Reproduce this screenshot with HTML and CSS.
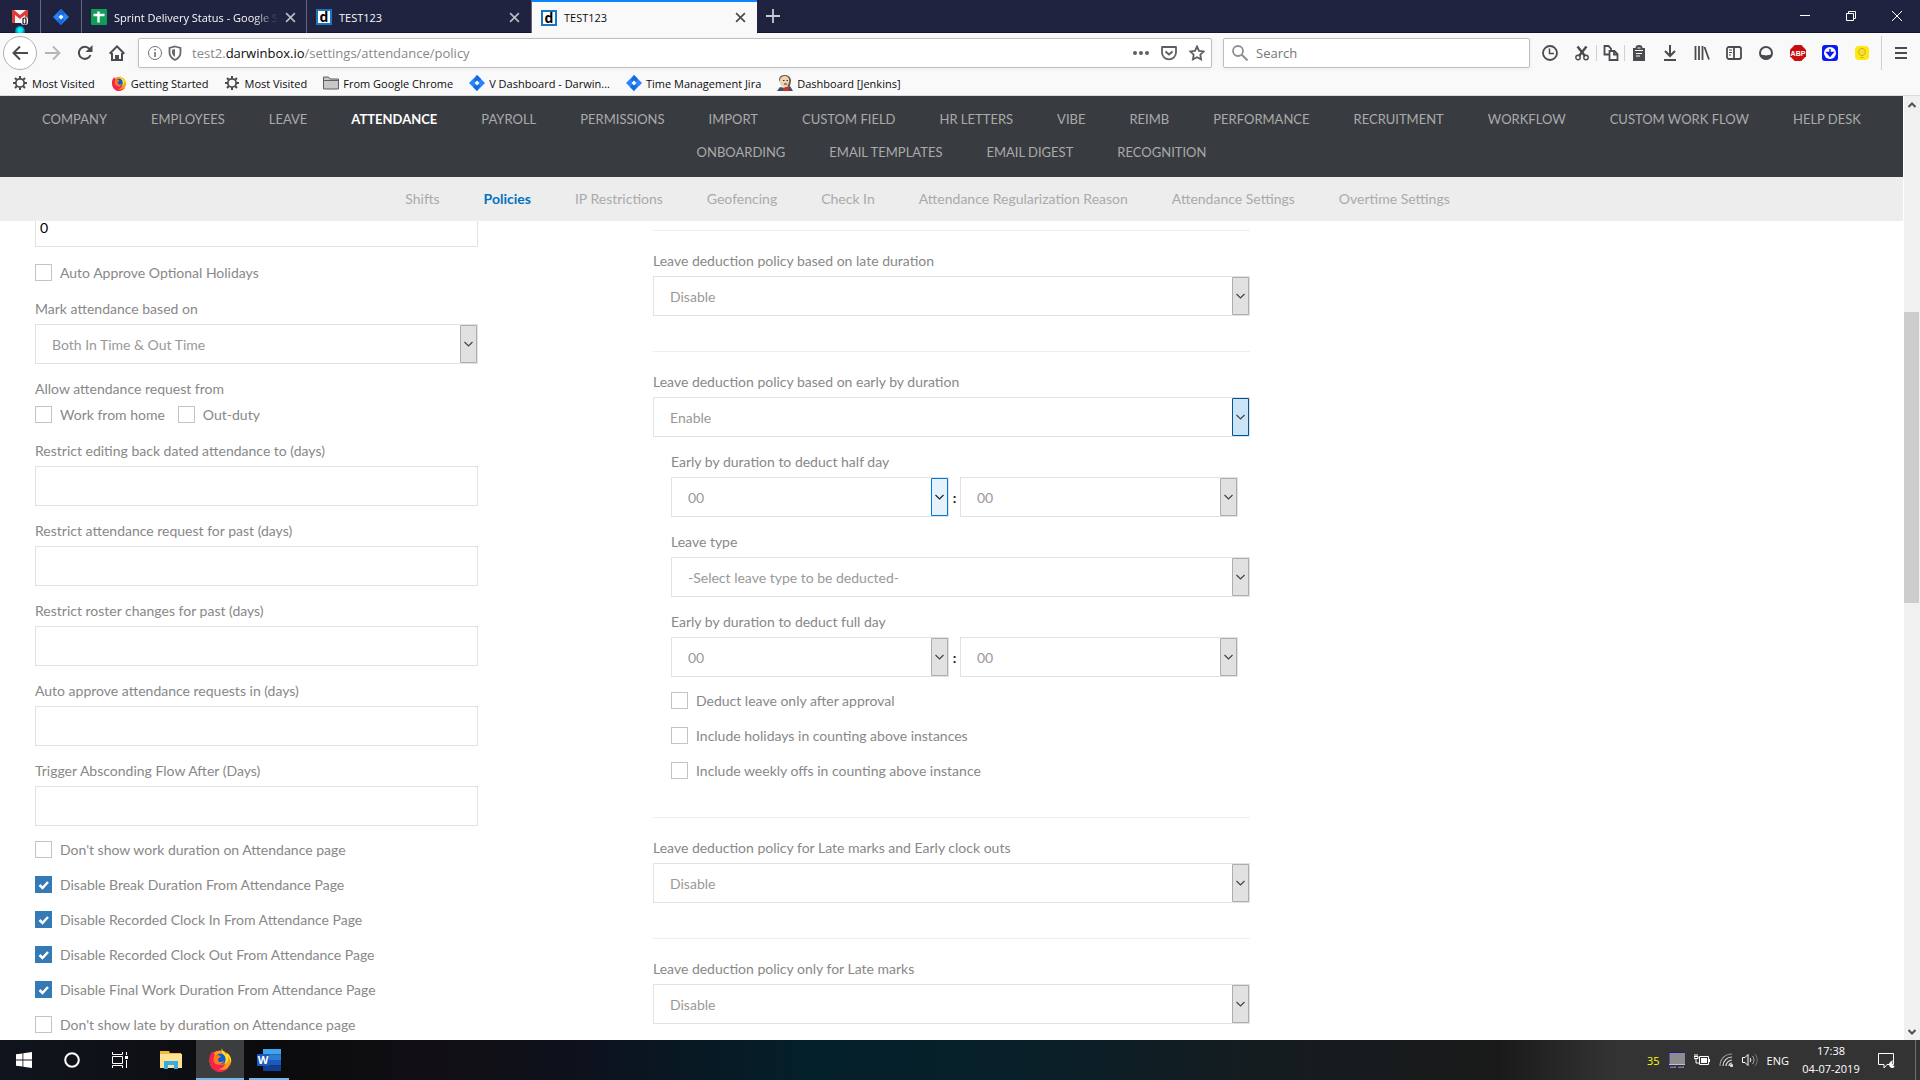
FILE: index.html
```html
<!DOCTYPE html>
<html lang="en">
<head>
    <meta charset="UTF-8">
    <meta name="viewport" content="width=device-width, initial-scale=1.0">
    <title>TEST123</title>
    <link rel="stylesheet" href="styles.css">
</head>
<body>
    <!-- shared icons -->
    <svg class="sprite" aria-hidden="true">
        <symbol id="jira" viewBox="0 0 16 16">
            <path d="M8 0l8 8-8 8-8-8z" fill="#2684ff"/>
            <path d="M8 0l4 4-4 4-3-3zM8 16l-4-4 4-4 3 3z" fill="#1769e0"/>
            <path d="M8 5.6L10.4 8 8 10.4 5.6 8z" fill="#fff"/>
        </symbol>
        <symbol id="gear" viewBox="0 0 16 16">
            <circle cx="8" cy="8" r="4.2" fill="none" stroke="#4a4a4f" stroke-width="1.8"/>
            <path d="M8 1v2.5M8 12.500v2.500M1 8h2.500M12.500 8H15M3 3l1.800 1.800M11.200 11.200L13 13M13 3l-1.800 1.800M4.800 11.200L3 13" stroke="#4a4a4f" stroke-width="2"/>
        </symbol>
        <symbol id="firefox" viewBox="0 0 24 24">
            <circle cx="12" cy="13" r="10.500" fill="#ff9a1f"/>
            <path d="M1.500 13C1 8 3 5 5 3c0 2 1 3 2 3.500C5 10 6 14 9 16s7 1 8-1c0 4-4 6-7 6 5 2 10 0 12-4-2 5-6 7-10 7C6 24 2 19 1.500 13z" fill="#f5224d"/>
            <circle cx="12.500" cy="11" r="5.500" fill="#0a5fd8"/>
            <path d="M7 8c3-2 4 0 6 0-1 2-3 2-3 4s3 3 6 1c-1 4-8 5-10 1-1-2-1-4 1-6z" fill="#ff7a16"/>
            <path d="M14 0c-1 3 0 5 2 7s2 6 1 9c3-2 4-5 3-8 2 2 3 6 2 10 3-7 0-11-3-13 0 1 0 2-1 2-1-3-4-4-4-7z" fill="#ffe226"/>
        </symbol>
        <symbol id="close" viewBox="0 0 10 10">
            <path d="M1 1l8 8M9 1L1 9" stroke="currentColor" stroke-width="1.500"/>
        </symbol>
    </svg>

    <header class="browser">
        <div class="tab-bar">
            <button class="tab pinned" aria-label="Gmail">
                <svg width="16" height="16" viewBox="0 0 16 16">
                    <path d="M0 1h16v13H0z" fill="#f4f4f4"/>
                    <path d="M0 14V1h2l6 5 6-5h2v13h-3V6L8 10 3 6v8z" fill="#dc3e37"/>
                    <rect x="9" y="8" width="7" height="8" rx="3" fill="#fff"/>
                    <rect x="11" y="9" width="3" height="6" rx="1" fill="none" stroke="#111" stroke-width="1.200"/>
                </svg>
                <span class="glow"></span>
            </button>
            <button class="tab pinned" aria-label="Jira"><svg width="16" height="16"><use href="#jira"/></svg></button>
            <div class="tab">
                <svg width="16" height="16" viewBox="0 0 16 16">
                    <rect width="16" height="16" rx="1" fill="#109d58"/>
                    <path d="M2.500 6h11M7.500 2.500v11" stroke="#fff" stroke-width="2.400"/>
                </svg>
                <span class="tab-title fade">Sprint Delivery Status - Google S</span>
                <button class="tab-close" aria-label="Close tab"><svg width="11" height="11"><use href="#close"/></svg></button>
            </div>
            <div class="tab">
                <span class="favicon">d</span>
                <span class="tab-title">TEST123</span>
                <button class="tab-close" aria-label="Close tab"><svg width="11" height="11"><use href="#close"/></svg></button>
            </div>
            <div class="tab active">
                <span class="favicon">d</span>
                <span class="tab-title">TEST123</span>
                <button class="tab-close" aria-label="Close tab"><svg width="11" height="11"><use href="#close"/></svg></button>
            </div>
            <button class="new-tab" aria-label="New tab">
                <svg width="14" height="14" viewBox="0 0 14 14"><path d="M7 0v14M0 7h14" stroke="#c9cad4" stroke-width="1.800"/></svg>
            </button>
            <div class="window-buttons">
                <button aria-label="Minimize"><svg width="10" height="10" viewBox="0 0 10 10"><path d="M0 4.500h10" stroke="#fff"/></svg></button>
                <button aria-label="Restore"><svg width="10" height="10" viewBox="0 0 10 10"><path d="M.5 2.500h7v7h-7zM2.500 2V.5h7v7H8" fill="none" stroke="#fff"/></svg></button>
                <button aria-label="Close"><svg width="10" height="10" viewBox="0 0 10 10"><path d="M0 0l10 10M10 0L0 10" stroke="#fff"/></svg></button>
            </div>
        </div>

        <div class="toolbar">
            <button class="tool back" aria-label="Back">
                <svg width="16" height="16" viewBox="0 0 16 16"><path d="M16 8H1.500M8 1.500L1.500 8 8 14.500" fill="none" stroke="#4a4a4f" stroke-width="2"/></svg>
            </button>
            <button class="tool" aria-label="Forward">
                <svg width="16" height="16" viewBox="0 0 16 16"><path d="M0 8h14.500M8 1.500L14.500 8 8 14.500" fill="none" stroke="#b5b5b7" stroke-width="1.800"/></svg>
            </button>
            <button class="tool" aria-label="Reload">
                <svg width="16" height="16" viewBox="0 0 16 16"><path d="M13.500 10A6 6 0 1 1 12.500 4" fill="none" stroke="#4a4a4f" stroke-width="2"/><path d="M15.500 0v7H8.500z" fill="#4a4a4f"/></svg>
            </button>
            <button class="tool" aria-label="Home">
                <svg width="16" height="16" viewBox="0 0 16 16"><path d="M.7 8.700L8 1.400l7.300 7.300" fill="none" stroke="#4a4a4f" stroke-width="2"/><path d="M3 8v7h10V8M7 15v-4h2v4" fill="none" stroke="#4a4a4f" stroke-width="2"/></svg>
            </button>
            <div class="url-bar">
                <svg width="16" height="16" viewBox="0 0 16 16"><circle cx="8" cy="8" r="6.500" fill="none" stroke="#737377"/><path d="M8 7v5M8 4v1.600" stroke="#737377" stroke-width="1.600"/></svg>
                <svg width="16" height="16" viewBox="0 0 16 16"><path d="M8 1.500l5.500 1.500v4.500c0 3.500-2.500 6-5.500 7.500-3-1.500-5.500-4-5.500-7.500V3z" fill="none" stroke="#6a6a6e" stroke-width="1.800"/><path d="M8 4v8C6 10.500 5 9 5 7.500V4.700z" fill="#6a6a6e"/></svg>
                <a class="url" href="#">test2.<b>darwinbox.io</b>/settings/attendance/policy</a>
                <svg width="16" height="16" viewBox="0 0 16 16" fill="#5f5f63"><circle cx="2" cy="8" r="2"/><circle cx="8" cy="8" r="2"/><circle cx="14" cy="8" r="2"/></svg>
                <svg width="16" height="16" viewBox="0 0 16 16" fill="none" stroke="#5f5f63" stroke-width="1.800"><path d="M1 2h14v5.500a7 6.800 0 0 1-14 0z" stroke-linejoin="round"/><path d="M4.500 6.500L8 9.500l3.500-3" stroke-width="2"/></svg>
                <svg width="16" height="16" viewBox="0 0 16 16"><path d="M8 1.500l2 4.300 4.700.6-3.400 3.300.8 4.700L8 12.200l-4.100 2.200.8-4.700L1.300 6.400 6 5.800z" fill="none" stroke="#5f5f63" stroke-width="1.800"/></svg>
            </div>
            <div class="search-bar">
                <svg width="16" height="16" viewBox="0 0 16 16"><circle cx="6" cy="6" r="5" fill="none" stroke="#8f8f92" stroke-width="1.800"/><path d="M9.500 9.500l6 6" stroke="#8f8f92" stroke-width="2"/></svg>
                <input type="text" aria-label="Search" placeholder="Search">
            </div>
            <div class="extensions">
                <button class="tool" aria-label="History"><svg width="16" height="16" viewBox="0 0 16 16" fill="none" stroke="#4a4a4f"><circle cx="8" cy="8" r="7" stroke-width="1.800"/><path d="M7.500 3.500V8.500H12" stroke-width="1.500"/></svg></button>
                <button class="tool" aria-label="Cut"><svg width="14" height="16" viewBox="0 0 14 16" fill="none" stroke="#4a4a4f"><circle cx="3" cy="12.500" r="2.200" stroke-width="1.400"/><circle cx="11" cy="12.500" r="2.200" stroke-width="1.400"/><path d="M4 11L11.500 1.500M10 11L2.500 1.500" stroke-width="2.400"/></svg></button>
                <div class="edit-tools">
                    <span class="divider"></span>
                    <button class="tool narrow" aria-label="Copy"><svg width="16" height="16" viewBox="0 0 16 16" fill="#f9f9fa" stroke="#4a4a4f" stroke-width="1.800"><path d="M1.500 1h4l2.500 2.500v6H1.500z"/><path d="M6.500 6h5l3 3v6h-8z"/><path d="M11 6v3.500h3.500" fill="none"/></svg></button>
                    <span class="divider"></span>
                    <button class="tool narrow" aria-label="Paste"><svg width="14" height="16" viewBox="0 0 14 16"><path d="M1 3h2.500a3.500 3 0 0 1 7 0H13v13H1z" fill="#4a4a4f"/><path d="M3 5.500h8M4 8.500h6M4 11h4M5.500 3h3" stroke="#f9f9fa" stroke-width="1.200"/></svg></button>
                </div>
                <button class="tool" aria-label="Downloads"><svg width="14" height="16" viewBox="0 0 14 16" fill="none" stroke="#4a4a4f" stroke-width="2"><path d="M7 0v11M2 6l5 5 5-5M1 15h12"/></svg></button>
                <button class="tool" aria-label="Library"><svg width="16" height="16" viewBox="0 0 16 16" stroke="#4a4a4f" stroke-width="1.800"><path d="M1.500 1v14M5 1v14M8.500 1v14M10.500 2L15 14.500"/></svg></button>
                <button class="tool" aria-label="Sidebar"><svg width="16" height="16" viewBox="0 0 16 16" fill="none" stroke="#4a4a4f"><rect x="1" y="2" width="14" height="12" rx="2" stroke-width="1.800"/><path d="M8 2v12" stroke-width="1.800"/><path d="M3 5h3M3 7.500h3M3 10h2"/></svg></button>
                <button class="tool" aria-label="Account"><svg width="16" height="16" viewBox="0 0 16 16"><circle cx="8" cy="8" r="6" fill="#f9f9fa" stroke="#4a4a4f" stroke-width="2"/><path d="M2 8.500c1 1.500 2.500 1.500 3.500 1.500h5c1 0 2.500 0 3.500-1.500C14 12 11 14.500 8 14.500S2 12 2 8.500z" fill="#4a4a4f"/><path d="M5 5v2a3 3.500 0 0 0 6 0V5z" fill="#f9f9fa"/></svg></button>
                <button class="tool" aria-label="Adblock Plus"><svg width="16" height="16" viewBox="0 0 16 16"><path d="M4.700 0h6.600L16 4.700v6.600L11.300 16H4.700L0 11.300V4.700z" fill="#c70d0d"/><text x="8" y="10.500" class="abp">ABP</text></svg></button>
                <button class="tool" aria-label="Download helper"><svg width="16" height="16" viewBox="0 0 16 16"><rect width="16" height="16" rx="3" fill="#0a1bf2"/><circle cx="8" cy="8" r="6" fill="#fff"/><path d="M8 4v5M5 7.500l3 3.500 3-3.500z" fill="#0a1bf2" stroke="#0a1bf2" stroke-width="1.500"/></svg></button>
                <button class="tool" aria-label="Lights"><svg width="16" height="16" viewBox="0 0 16 16"><rect x="1" y="1" width="14" height="14" rx="4" fill="#fbea0c"/><path d="M6.500 10.500C3 7 5 3.500 8 3.500s5 3.500 1.500 7zM6.500 12.500h3" fill="#f7dc3a" stroke="#cfae1d"/></svg></button>
                <span class="divider tall"></span>
                <button class="tool" aria-label="Menu"><svg width="12" height="12" viewBox="0 0 12 12"><path d="M0 1h12M0 6h12M0 11h12" stroke="#4a4a4f" stroke-width="2"/></svg></button>
            </div>
        </div>

        <nav class="bookmarks" aria-label="Bookmarks">
            <a href="#"><svg width="16" height="16"><use href="#gear"/></svg>Most Visited</a>
            <a href="#"><svg width="16" height="16"><use href="#firefox"/></svg>Getting Started</a>
            <a href="#"><svg width="16" height="16"><use href="#gear"/></svg>Most Visited</a>
            <a href="#"><svg width="16" height="16" viewBox="0 0 16 16"><path d="M.5 14V2h5l1.500 2h8.500v10z" fill="#c8c8ca" stroke="#5f5f63"/><path d="M1 5.500h14" stroke="#5f5f63"/></svg>From Google Chrome</a>
            <a href="#"><svg width="16" height="16"><use href="#jira"/></svg>V Dashboard - Darwin...</a>
            <a href="#"><svg width="16" height="16"><use href="#jira"/></svg>Time Management Jira</a>
            <a href="#">
                <svg width="16" height="16" viewBox="0 0 16 16"><path d="M2 5C2 1 5 0 8 0s6 2 6 6l-1 5H5z" fill="#6b5a4c"/><path d="M3 5c0-3 3-4 5-4s5 2 4 6-2 5-4 5-4-1-5-4z" fill="#efd2b0"/><path d="M0 16l3-4 5 1 5-2 3 5z" fill="#33566b"/><path d="M6 13l6-2v5H6z" fill="#c9302c"/><path d="M6 5.500h1.500M9.500 5.500H11M7 9h3" stroke="#333"/></svg>Dashboard [Jenkins]</a>
        </nav>
    </header>

    <div class="viewport">
        <div class="page">
            <nav class="main-nav" aria-label="Settings">
                <a href="#">COMPANY</a>
                <a href="#">EMPLOYEES</a>
                <a href="#">LEAVE</a>
                <a href="#" class="current">ATTENDANCE</a>
                <a href="#">PAYROLL</a>
                <a href="#">PERMISSIONS</a>
                <a href="#">IMPORT</a>
                <a href="#">CUSTOM FIELD</a>
                <a href="#">HR LETTERS</a>
                <a href="#">VIBE</a>
                <a href="#">REIMB</a>
                <a href="#">PERFORMANCE</a>
                <a href="#">RECRUITMENT</a>
                <a href="#">WORKFLOW</a>
                <a href="#">CUSTOM WORK FLOW</a>
                <a href="#">HELP DESK</a>
                <a href="#">ONBOARDING</a>
                <a href="#">EMAIL TEMPLATES</a>
                <a href="#">EMAIL DIGEST</a>
                <a href="#">RECOGNITION</a>
            </nav>
            <nav class="sub-nav" aria-label="Attendance">
                <a href="#">Shifts</a>
                <a href="#" class="current">Policies</a>
                <a href="#">IP Restrictions</a>
                <a href="#">Geofencing</a>
                <a href="#">Check In</a>
                <a href="#">Attendance Regularization Reason</a>
                <a href="#">Attendance Settings</a>
                <a href="#">Overtime Settings</a>
            </nav>

            <main class="content">
                <form class="policy-form">
                    <div class="column">
                        <div class="form-group">
                            <input type="text" class="form-control" aria-label="Days" value="0">
                        </div>
                        <div class="check-row spaced">
                            <label class="check"><input type="checkbox">Auto Approve Optional Holidays</label>
                        </div>
                        <div class="form-group">
                            <label for="mark-based">Mark attendance based on</label>
                            <select id="mark-based" class="form-control"><option>Both In Time &amp; Out Time</option></select>
                        </div>
                        <fieldset>
                            <legend>Allow attendance request from</legend>
                            <div class="check-row spaced">
                                <label class="check"><input type="checkbox">Work from home</label>
                                <label class="check"><input type="checkbox">Out-duty</label>
                            </div>
                        </fieldset>
                        <div class="form-group">
                            <label for="back-dated">Restrict editing back dated attendance to (days)</label>
                            <input type="text" id="back-dated" class="form-control">
                        </div>
                        <div class="form-group">
                            <label for="request-past">Restrict attendance request for past (days)</label>
                            <input type="text" id="request-past" class="form-control">
                        </div>
                        <div class="form-group">
                            <label for="roster-past">Restrict roster changes for past (days)</label>
                            <input type="text" id="roster-past" class="form-control">
                        </div>
                        <div class="form-group">
                            <label for="auto-approve">Auto approve attendance requests in (days)</label>
                            <input type="text" id="auto-approve" class="form-control">
                        </div>
                        <div class="form-group">
                            <label for="absconding">Trigger Absconding Flow After (Days)</label>
                            <input type="text" id="absconding" class="form-control">
                        </div>
                        <div class="check-row"><label class="check"><input type="checkbox">Don't show work duration on Attendance page</label></div>
                        <div class="check-row"><label class="check"><input type="checkbox" checked>Disable Break Duration From Attendance Page</label></div>
                        <div class="check-row"><label class="check"><input type="checkbox" checked>Disable Recorded Clock In From Attendance Page</label></div>
                        <div class="check-row"><label class="check"><input type="checkbox" checked>Disable Recorded Clock Out From Attendance Page</label></div>
                        <div class="check-row"><label class="check"><input type="checkbox" checked>Disable Final Work Duration From Attendance Page</label></div>
                        <div class="check-row"><label class="check"><input type="checkbox">Don't show late by duration on Attendance page</label></div>
                    </div>

                    <div class="column deductions">
                        <section>
                            <div class="form-group">
                                <label for="late-duration">Leave deduction policy based on late duration</label>
                                <select id="late-duration" class="form-control"><option>Disable</option></select>
                            </div>
                        </section>
                        <section>
                            <div class="form-group">
                                <label for="early-duration">Leave deduction policy based on early by duration</label>
                                <select id="early-duration" class="form-control pressed"><option>Enable</option></select>
                            </div>
                            <div class="nested">
                                <div class="form-group">
                                    <label for="half-hours">Early by duration to deduct half day</label>
                                    <div class="time-row">
                                        <select id="half-hours" class="form-control hovered"><option>00</option></select>
                                        <span>:</span>
                                        <select class="form-control" aria-label="Half day minutes"><option>00</option></select>
                                    </div>
                                </div>
                                <div class="form-group">
                                    <label for="leave-type">Leave type</label>
                                    <select id="leave-type" class="form-control"><option>-Select leave type to be deducted-</option></select>
                                </div>
                                <div class="form-group">
                                    <label for="full-hours">Early by duration to deduct full day</label>
                                    <div class="time-row">
                                        <select id="full-hours" class="form-control"><option>00</option></select>
                                        <span>:</span>
                                        <select class="form-control" aria-label="Full day minutes"><option>00</option></select>
                                    </div>
                                </div>
                                <div class="check-row"><label class="check"><input type="checkbox">Deduct leave only after approval</label></div>
                                <div class="check-row"><label class="check"><input type="checkbox">Include holidays in counting above instances</label></div>
                                <div class="check-row"><label class="check"><input type="checkbox">Include weekly offs in counting above instance</label></div>
                            </div>
                        </section>
                        <section>
                            <div class="form-group">
                                <label for="late-early">Leave deduction policy for Late marks and Early clock outs</label>
                                <select id="late-early" class="form-control"><option>Disable</option></select>
                            </div>
                        </section>
                        <section>
                            <div class="form-group">
                                <label for="late-only">Leave deduction policy only for Late marks</label>
                                <select id="late-only" class="form-control"><option>Disable</option></select>
                            </div>
                        </section>
                    </div>
                </form>
            </main>
        </div>
        <div class="scrollbar">
            <button aria-label="Scroll up"><svg width="8" height="6" viewBox="0 0 8 6"><path d="M.5 5L4 1.500 7.500 5" fill="none" stroke="#505050" stroke-width="2"/></svg></button>
            <div class="track-before"></div>
            <div class="thumb"></div>
            <div class="track-after"></div>
            <button aria-label="Scroll down"><svg width="8" height="6" viewBox="0 0 8 6"><path d="M.5 1L4 4.500 7.500 1" fill="none" stroke="#505050" stroke-width="2"/></svg></button>
        </div>
    </div>

    <footer class="taskbar">
        <button aria-label="Start"><svg width="16" height="16" viewBox="0 0 16 16" fill="#fff"><path d="M0 2.300l6.500-.9v6.200H0zM7.300 1.300L16 0v7.600H7.300zM0 8.400h6.500v6.200L0 13.700zM7.300 8.400H16V16l-8.700-1.200z"/></svg></button>
        <button aria-label="Cortana"><svg width="16" height="16" viewBox="0 0 16 16"><circle cx="8" cy="8" r="6.800" fill="none" stroke="#fff" stroke-width="2"/></svg></button>
        <button aria-label="Task view"><svg width="16" height="16" viewBox="0 0 16 16" fill="none" stroke="#fff"><path d="M.5 4.500h10v7H.5zM.5 0v2.500h10V0M.5 16v-2.500h10V16M14.500 0v3M14.500 8v8"/><path d="M13 4h3v3h-3z" fill="#fff" stroke="none"/></svg></button>
        <button class="app" aria-label="File Explorer"><svg width="22" height="18" viewBox="0 0 22 18"><path d="M0 0h9l1 2h11v15H0z" fill="#f0b93a"/><path d="M0 3h22v14H0z" fill="#ffe294"/><path d="M4 18v-8h14v8h-4v-4H8v4z" fill="#35aee5"/></svg></button>
        <button class="app open focused" aria-label="Firefox"><svg width="24" height="24"><use href="#firefox"/></svg></button>
        <button class="app open" aria-label="Word"><svg width="24" height="22" viewBox="0 0 24 22"><path d="M6 0h18v5.500H6z" fill="#41a5ee"/><path d="M6 5.500h18V11H6z" fill="#2b7cd3"/><path d="M6 11h18v5.500H6z" fill="#185abd"/><path d="M6 16.500h18V22H6z" fill="#103f91"/><rect y="5" width="12" height="12" rx="1" fill="#185abd"/><text x="6" y="15" class="word-mark">W</text></svg></button>
        <div class="tray">
            <span class="temperature">35</span>
            <svg width="16" height="16" viewBox="0 0 16 16"><path d="M0 0h16v12H0z" fill="#8c8c8c"/><path d="M0 12V.5h16" fill="none" stroke="#1c1c9c"/><path d="M0 12.500h16M1 15h6M9 15h6" stroke="#c4c4c4"/><path d="M0 14h6M8 14h6" stroke="#1c1c9c"/></svg>
            <svg width="16" height="12" viewBox="0 0 16 12" fill="none" stroke="#fff"><path d="M5.500 2.500h9v8h-9zM0 2.500h4v2H0zM1 0v2M3 0v2M2 5v4h3"/><path d="M7 4h6v5H7zM15 5h1v3h-1z" fill="#fff" stroke="none"/></svg>
            <svg width="14" height="14" viewBox="0 0 14 14" fill="none" stroke="#ddd" stroke-width="1.200"><path d="M1 13C1 6 6 1 13 1" stroke="#999"/><path d="M4 13c0-5 4-9 9-9M7 13c0-3 3-6 6-6M10 13c0-2 1-3 3-3"/><circle cx="12.500" cy="12.500" r="1" fill="#fff"/></svg>
            <svg width="16" height="14" viewBox="0 0 16 14" fill="none" stroke="#fff"><path d="M.5 4.500H3l3-3v11l-3-3H.5z"/><path d="M8 5c1 1 1 3 0 4"/><path d="M10.500 3c2 2 2 6 0 8" stroke="#aaa"/><path d="M13 1c3 4 3 8 0 12" stroke="#777"/></svg>
            <span class="language">ENG</span>
            <div class="clock"><span>17:38</span><span>04-07-2019</span></div>
            <svg width="17" height="17" viewBox="0 0 17 17"><path d="M.5 1.500h15v11H9L6 16v-3.500H.5z" fill="none" stroke="#fff"/><path d="M15 8.500c-5 1-5 6-1.500 7.500 2 0 3-.5 3-2-2 0-3-3-1.500-5.500z" fill="#fff"/></svg>
        </div>
    </footer>
</body>
</html>
```
FILE: styles.css
```css
* {
    box-sizing: border-box;
}
body {
    margin: 0;
    height: 100vh;
    display: flex;
    flex-direction: column;
    overflow: hidden;
    font-family: Lato, sans-serif;
    font-size: 14px;
    color: #888;
    background: #fff;
}
a {
    color: inherit;
    text-decoration: none;
}
button {
    display: flex;
    align-items: center;
    justify-content: center;
    padding: 0;
    border: 0;
    background: none;
    color: inherit;
}
svg {
    flex: none;
}
.sprite {
    position: absolute;
    width: 0;
    height: 0;
}

/* browser */
.browser {
    flex: none;
    font-family: "Open Sans", sans-serif;
    font-size: 11px;
    color: #0c0c0d;
    background: #f9f9fa;
    border-bottom: 1px solid #dcdcdc;
}
.tab-bar {
    display: flex;
    height: 33px;
    background: #202340;
    color: #f9f9fa;
    border-bottom: 1px solid #14162b;
}
.tab {
    position: relative;
    display: flex;
    align-items: center;
    gap: 7px;
    width: 225px;
    height: 33px;
    padding: 1px 11px 0 9px;
    border-right: 1px solid #64667b;
}
.tab.pinned {
    width: 41px;
    justify-content: center;
    padding: 1px 0 0;
}
.glow {
    position: absolute;
    left: 15px;
    bottom: 0;
    width: 10px;
    height: 7px;
    border-radius: 5px 5px 0 0;
    background: radial-gradient(circle at 50% 60%, #00f0ff 30%, #14606f 80%);
}
.tab.active {
    background: #f9f9fa;
    color: #0c0c0d;
    border-top: 2px solid #0a84ff;
    border-right: 0;
    padding-top: 0;
}
.tab-title {
    flex: 1;
    white-space: nowrap;
}
.fade {
    mask-image: linear-gradient(to right, #000 85%, transparent);
}
.tab-close {
    color: #b9bac6;
}
.active .tab-close {
    color: #4a4a4f;
}
.favicon {
    width: 16px;
    height: 16px;
    border: 2px solid #1677c4;
    background: #fff;
    color: #000;
    font: bold 14px/11px "Open Sans", sans-serif;
    text-align: center;
}
.new-tab {
    width: 32px;
}
.window-buttons {
    display: flex;
    margin-left: auto;
}
.window-buttons button {
    width: 46px;
}
.toolbar {
    display: flex;
    align-items: center;
    height: 40px;
    padding: 0 3px;
}
.tool {
    width: 32px;
    height: 32px;
}
.tool.narrow {
    width: 27px;
}
.tool.back {
    width: 34px;
    height: 34px;
    border: 1px solid #b1b1b1;
    border-radius: 50%;
    background: #fff;
}
.url-bar,
.search-bar {
    display: flex;
    align-items: center;
    height: 30px;
    background: #fff;
    border: 1px solid #bfbfc0;
    border-radius: 2px;
    box-shadow: 0 1px 4px rgba(0, 0, 0, 0.06);
    font-size: 13px;
}
.url-bar {
    flex: 1;
    gap: 4px;
    margin-left: 5px;
    padding: 0 6px 0 8px;
}
.url {
    flex: 1;
    padding-left: 5px;
    color: #88888a;
}
.url b {
    font-weight: normal;
    color: #0c0c0d;
}
.url-bar svg:nth-of-type(n+3) {
    margin-left: 8px;
}
.search-bar {
    width: 307px;
    gap: 8px;
    margin-left: 11px;
    padding: 0 8px;
}
.search-bar input {
    flex: 1;
    min-width: 0;
    padding: 0;
    border: 0;
    outline: 0;
    font: inherit;
}
.search-bar input::placeholder {
    color: #757575;
}
.extensions,
.edit-tools {
    display: flex;
    align-items: center;
}
.extensions {
    margin-left: 4px;
}
.edit-tools {
    margin: 0 2px 0 -2px;
}
.divider {
    width: 1px;
    height: 16px;
    background: #d0d0d2;
}
.divider.tall {
    height: 34px;
    margin: 0 3px;
}
.bookmarks {
    display: flex;
    gap: 16px;
    height: 22px;
    padding: 0 12px;
}
.bookmarks a {
    display: flex;
    align-items: center;
    gap: 4px;
    height: 20px;
}
.abp {
    font: bold 7px "Liberation Sans", sans-serif;
    fill: #fff;
    text-anchor: middle;
}

/* page */
.viewport {
    flex: 1;
    display: flex;
    min-height: 0;
}
.page {
    flex: 1;
    display: flex;
    flex-direction: column;
    margin-right: 1px;
}
.main-nav {
    flex: none;
    display: flex;
    flex-wrap: wrap;
    justify-content: center;
    padding: 7px 0 8px;
    font-size: 13px;
    line-height: 33px;
    background: #383c40;
    color: #aaa;
}
.main-nav a {
    padding: 0 22px;
}
.main-nav .current {
    color: #fff;
    font-weight: bold;
}
.sub-nav {
    flex: none;
    display: flex;
    justify-content: center;
    gap: 44px;
    padding-right: 48px;
    line-height: 44px;
    background: #ededed;
    color: #aaa;
}
.sub-nav .current {
    color: #0073c0;
    font-weight: bold;
}
.content {
    flex: 1;
    min-height: 0;
    overflow: hidden;
}
/* form is scrolled, first row sits partly under the sub nav */
.policy-form {
    display: grid;
    grid-template-columns: 443fr 597fr 443fr;
    column-gap: 175px;
    margin-top: -14px;
    padding: 0 35px;
}
.form-group {
    margin-bottom: 15px;
}
.form-group > label,
legend {
    display: block;
    padding: 0;
    margin-bottom: 5px;
    line-height: 20px;
}
fieldset {
    margin: 0;
    padding: 0;
    border: 0;
}
.form-control {
    display: block;
    width: 100%;
    height: 40px;
    padding: 0 4px;
    border: 1px solid #e2e2e2;
    border-radius: 0;
    background: #fff;
    font: inherit;
    color: #000;
}
select.form-control {
    appearance: none;
    padding: 0 30px 0 16px;
    color: #999;
    background: #fff url("data:image/svg+xml,%3Csvg xmlns='http://www.w3.org/2000/svg' width='17' height='38'%3E%3Cpath d='M.5.5h16v37H.5z' fill='%23e1e1e1' stroke='%23adadad'/%3E%3Cpath d='M4.500 17l4 4 4-4' fill='none' stroke='%23444' stroke-width='1.200'/%3E%3C/svg%3E") no-repeat right center;
}
select.pressed {
    background-image: url("data:image/svg+xml,%3Csvg xmlns='http://www.w3.org/2000/svg' width='17' height='38'%3E%3Cpath d='M.5.5h16v37H.5z' fill='%23cce4f7' stroke='%23005499'/%3E%3Cpath d='M4.500 17l4 4 4-4' fill='none' stroke='%23444' stroke-width='1.200'/%3E%3C/svg%3E");
}
select.hovered {
    background-image: url("data:image/svg+xml,%3Csvg xmlns='http://www.w3.org/2000/svg' width='17' height='38'%3E%3Cpath d='M.5.5h16v37H.5z' fill='%23e5f1fb' stroke='%230078d7'/%3E%3Cpath d='M4.500 17l4 4 4-4' fill='none' stroke='%23222' stroke-width='1.200'/%3E%3C/svg%3E");
}
.check-row {
    display: flex;
    gap: 13px;
    margin-bottom: 18px;
}
.check-row.spaced {
    padding-top: 2px;
}
.check {
    display: flex;
    align-items: center;
    gap: 8px;
    line-height: 17px;
}
.check input {
    appearance: none;
    width: 17px;
    height: 17px;
    margin: 0;
    border: 1px solid #c4c4c4;
    background: #fff;
}
.check input:checked {
    border-color: #337ab7;
    background: #337ab7 url("data:image/svg+xml,%3Csvg xmlns='http://www.w3.org/2000/svg' width='15' height='15'%3E%3Cpath d='M3.500 8l3 3 5.500-6' fill='none' stroke='%23fff' stroke-width='2.500'/%3E%3C/svg%3E") no-repeat center;
}
.deductions {
    padding-top: 23px;
}
.deductions section {
    padding: 20px 0;
    border-top: 1px solid #eee;
}
.nested {
    padding-left: 18px;
}
.time-row {
    display: flex;
    align-items: center;
    padding-right: 12px;
}
.time-row span {
    width: 11px;
    flex: none;
    text-align: center;
    font-weight: bold;
    color: #222;
}
.scrollbar {
    display: flex;
    flex-direction: column;
    width: 16px;
    background: #f0f0f0;
}
.scrollbar button {
    height: 17px;
}
.track-before {
    flex: 199;
}
.thumb {
    flex: 291;
    margin-right: 1px;
    background: #cdcdcd;
}
.track-after {
    flex: 420;
}

/* taskbar */
.taskbar {
    flex: none;
    display: flex;
    height: 40px;
    font-family: "Open Sans", sans-serif;
    font-size: 11px;
    color: #fff;
    background: linear-gradient(to right, #10151d, #0b0b0e 14%, #110f13 23%, #0d111c 30%, #04202a 42%, #07202a 52%, #141c20 65%, #191919 78%, #333 84%);
}
.taskbar button {
    width: 48px;
}
.taskbar .app {
    margin-left: 1px;
}
.taskbar .app:nth-of-type(4) {
    margin-left: 3px;
}
.taskbar .open {
    background: linear-gradient(#76b9ed, #76b9ed) no-repeat center bottom / 40px 2px;
}
.taskbar .focused {
    background-color: #3c3d3f;
    background-size: 100% 2px;
}
.word-mark {
    font: bold 11px "Open Sans", sans-serif;
    fill: #fff;
    text-anchor: middle;
}
.tray {
    display: flex;
    align-items: center;
    gap: 9px;
    margin: 0 4px 0 auto;
    padding-right: 20px;
    border-right: 1px solid #707070;
}
.temperature {
    color: #ff0;
}
.clock {
    display: flex;
    flex-direction: column;
    align-items: center;
    width: 66px;
    margin-right: 5px;
    line-height: 18px;
}
```
